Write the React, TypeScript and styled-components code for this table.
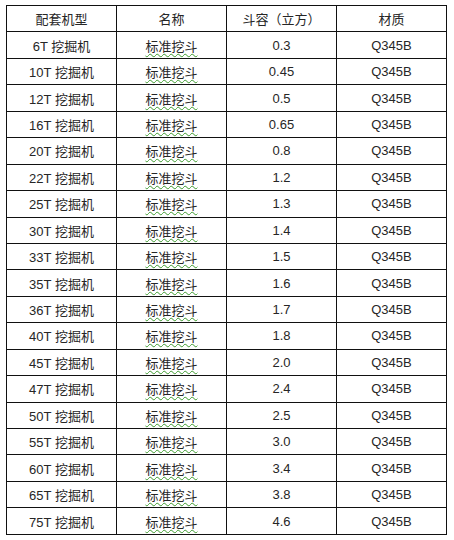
import React from 'react';
import styled, {createGlobalStyle} from "styled-components";

const GlobalStyle = createGlobalStyle`
  html, body {
    margin: 0;
    padding: 0;
    background: #ffffff;
  }
  body {
    font-family: "Liberation Sans", "Noto Sans CJK SC", sans-serif;
  }
`;

const rows = [
    {model: "6T", volume: "0.3"},
    {model: "10T", volume: "0.45"},
    {model: "12T", volume: "0.5"},
    {model: "16T", volume: "0.65"},
    {model: "20T", volume: "0.8"},
    {model: "22T", volume: "1.2"},
    {model: "25T", volume: "1.3"},
    {model: "30T", volume: "1.4"},
    {model: "33T", volume: "1.5"},
    {model: "35T", volume: "1.6"},
    {model: "36T", volume: "1.7"},
    {model: "40T", volume: "1.8"},
    {model: "45T", volume: "2.0"},
    {model: "47T", volume: "2.4"},
    {model: "50T", volume: "2.5"},
    {model: "55T", volume: "3.0"},
    {model: "60T", volume: "3.4"},
    {model: "65T", volume: "3.8"},
    {model: "75T", volume: "4.6"},
];

const headers = ["配套机型", "名称", "斗容（立方）", "材质"];

const App: React.FC = () => {
    return (
        <>
            <GlobalStyle/>
            <Page>
                <Table>
                    {headers.map((h) => (
                        <Cell key={h}>{h}</Cell>
                    ))}
                    {rows.map((row) => (
                        <React.Fragment key={row.model}>
                            <Cell>{row.model} 挖掘机</Cell>
                            <Cell><Squiggle>标准挖斗</Squiggle></Cell>
                            <Cell>{row.volume}</Cell>
                            <Cell>Q345B</Cell>
                        </React.Fragment>
                    ))}
                </Table>
            </Page>
        </>
    );
};

export default App;

const Page = styled.div`
  width: 454px;
  height: 540px;
  padding: 5px 0 0 6px;
  box-sizing: border-box;
  overflow: hidden;
`;

const Table = styled.div`
  display: grid;
  grid-template-columns: repeat(4, 109px);
  grid-auto-rows: 25.45px;
  gap: 1px;
  padding: 1px;
  width: fit-content;
  background: #111;
`;

const Cell = styled.div`
  background: #fff;
  display: flex;
  align-items: center;
  justify-content: center;
  font-size: 13px;
  color: #262626;
  white-space: nowrap;
`;

const Squiggle = styled.span`
  text-decoration: underline wavy #3c9a2e;
  text-decoration-thickness: 1px;
  text-underline-offset: 2px;
`;
